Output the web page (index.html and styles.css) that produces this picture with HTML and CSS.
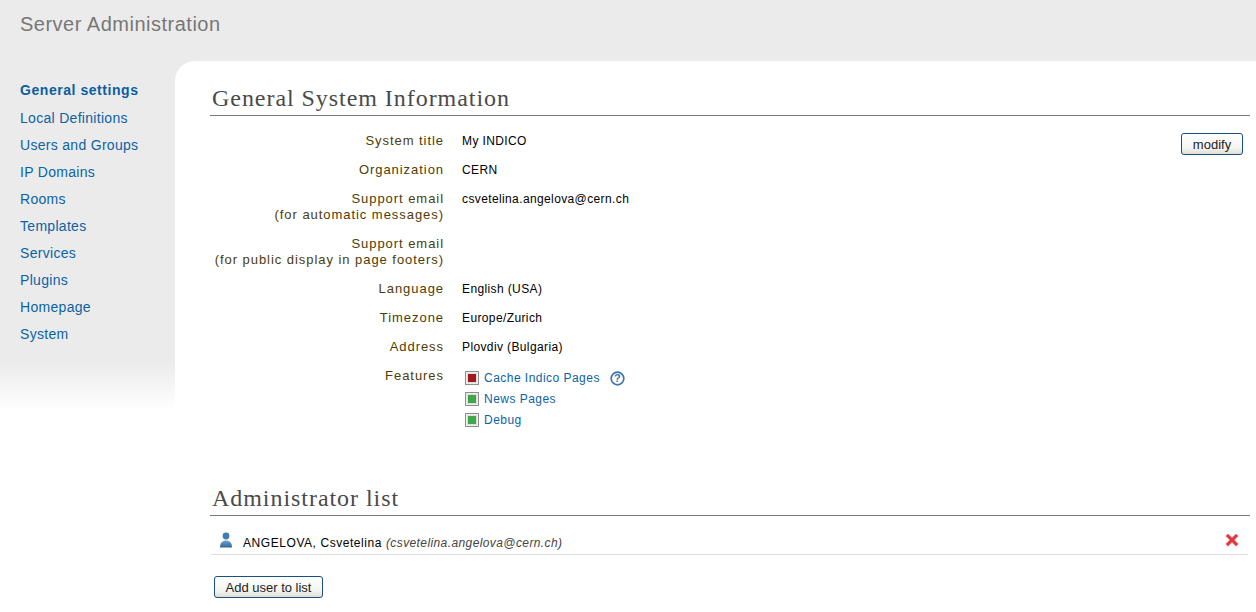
FILE: index.html
```html
<!DOCTYPE html>
<html lang="en">
<head>
<meta charset="utf-8">
<title>Server Administration</title>
<link rel="stylesheet" href="styles.css">
</head>
<body>
<header class="top"><h1>Server Administration</h1></header>
<div class="shell">
  <nav class="side">
    <a class="active" href="#">General settings</a>
    <a href="#">Local Definitions</a>
    <a href="#">Users and Groups</a>
    <a href="#">IP Domains</a>
    <a href="#">Rooms</a>
    <a href="#">Templates</a>
    <a href="#">Services</a>
    <a href="#">Plugins</a>
    <a href="#">Homepage</a>
    <a href="#">System</a>
  </nav>
  <main class="main">
    <h2 class="section">General System Information</h2>
    <div class="info">
      <div class="grid">
        <div class="label">System title</div><div class="value">My INDICO</div>
        <div class="label">Organization</div><div class="value">CERN</div>
        <div class="label">Support email<br>(for automatic messages)</div><div class="value">csvetelina.angelova@cern.ch</div>
        <div class="label">Support email<br>(for public display in page footers)</div><div class="value"></div>
        <div class="label">Language</div><div class="value">English (USA)</div>
        <div class="label">Timezone</div><div class="value">Europe/Zurich</div>
        <div class="label">Address</div><div class="value">Plovdiv (Bulgaria)</div>
        <div class="label">Features</div>
        <div class="features">
          <div class="feature"><span class="box"><i class="off"></i></span><a href="#">Cache Indico Pages</a>
            <svg class="help" width="15" height="15" viewBox="0 0 15 15"><circle cx="7.5" cy="7.5" r="6.3" fill="#fff" stroke="#3f75a8" stroke-width="1.7"/><text x="7.5" y="11.3" text-anchor="middle" class="helpq">?</text></svg>
          </div>
          <div class="feature"><span class="box"><i class="on"></i></span><a href="#">News Pages</a></div>
          <div class="feature"><span class="box"><i class="on"></i></span><a href="#">Debug</a></div>
        </div>
      </div>
      <button class="btn modify" type="button">modify</button>
    </div>
    <h2 class="section second">Administrator list</h2>
    <div class="user">
      <svg class="person" width="14" height="16" viewBox="0 0 14 16"><defs><linearGradient id="pg" x1="0" y1="0" x2="0" y2="1"><stop offset="0" stop-color="#6ea3d0"/><stop offset="1" stop-color="#2f6797"/></linearGradient></defs><circle cx="7" cy="4" r="3.4" fill="#3f7cb0"/><path d="M1 15.500C1 10.500 3.500 8.500 7 8.500S13 10.500 13 15.500Z" fill="url(#pg)"/></svg>
      <span class="name">ANGELOVA, Csvetelina <em>(csvetelina.angelova@cern.ch)</em></span>
      <svg class="remove" width="14" height="14" viewBox="0 0 14 14"><path d="M3 1 7 4.800 11 1 13.200 3 9.300 7 13.200 11 11 13.200 7 9.300 3 13.200 .8 11 4.800 7 .8 3Z" fill="#e8343f" stroke="#d9757a" stroke-width=".7"/></svg>
    </div>
    <button class="btn add" type="button">Add user to list</button>
  </main>
</div>
</body>
</html>
```
FILE: styles.css
```css
* { box-sizing: border-box; }
html, body { margin: 0; height: 100%; }
body {
  width: 1256px;
  height: 612px;
  overflow: hidden;
  background: #fff;
  font-family: "Liberation Sans", Arial, sans-serif;
  font-size: 12px;
  color: #000;
  display: flex;
  flex-direction: column;
}
a { color: #0b63a5; text-decoration: none; }

.top { height: 61px; flex: none; background: #ebebeb; padding: 13px 0 0 20px; }
.top h1 { margin: 0; font-size: 20px; line-height: 23px; font-weight: 400; color: #777; letter-spacing: .5px; }

.shell {
  flex: 1;
  display: flex;
  align-items: flex-start;
  background: linear-gradient(to bottom, #ebebeb 0, #ebebeb 300px, #fff 350px) 0 0 / 200px 350px no-repeat;
}

.side {
  width: 175px;
  flex: none;
  padding: 16px 0 0 20px;
  display: flex;
  flex-direction: column;
}
.side a { height: 27px; line-height: 27px; font-size: 14px; letter-spacing: .3px; }
.side a.active { height: 28px; font-weight: 700; color: #0b5ea0; letter-spacing: .55px; }

.main { flex: 1; height: 551px; padding: 20px 6px 0 35px; background: #fff; border-top-left-radius: 20px; }

.section {
  margin: 0;
  height: 35px;
  padding-left: 2px;
  border-bottom: 1px solid #777;
  font-family: "Liberation Serif", "Times New Roman", serif;
  font-size: 24px;
  line-height: 35px;
  font-weight: 400;
  color: #4a4a4a;
  letter-spacing: .95px;
}
.second { margin-top: 53px; }

.info { position: relative; padding-top: 17px; }
.grid { display: grid; grid-template-columns: 234px 1fr; column-gap: 18px; row-gap: 13px; }
.label { text-align: right; color: #4e3b05; font-size: 13px; line-height: 16px; letter-spacing: .95px; }
.value { font-size: 12px; line-height: 16px; min-height: 16px; letter-spacing: .38px; }
.features { display: flex; flex-direction: column; padding: 2px 0 0 3px; gap: 5px; }
.feature { display: flex; align-items: center; height: 16px; font-size: 12px; letter-spacing: .47px; }
.feature a { margin-left: 5px; }
.box { width: 14px; height: 14px; border: 1px solid #8f8f8f; background: #eee; display: flex; align-items: center; justify-content: center; }
.box i { display: block; width: 10px; height: 10px; border: 1px solid #ddd; }
.box .off { background: #a11a1f; }
.box .on { background: #3fa64a; }
.help { margin-left: 10px; }
.helpq { font-family: "Liberation Sans", Arial, sans-serif; font-size: 11px; font-weight: 700; fill: #3f75a8; }

.btn {
  font-family: "Liberation Sans", Arial, sans-serif;
  font-size: 13px;
  color: #222;
  padding: 0;
  height: 22px;
  border: 1px solid #1b4f80;
  border-radius: 3px;
  background: linear-gradient(to bottom, #fff 0, #f4f4f0 70%, #deddd6 100%);
}
.modify { position: absolute; top: 17px; right: 7px; width: 62px; }
.add { display: block; width: 109px; margin: 21px 0 0 4px; }

.user {
  display: flex;
  align-items: flex-end;
  height: 39px;
  margin: 0 2px 0 1px;
  padding: 0 9px 4px 8px;
  border-bottom: 1px solid #ddd;
}
.person { flex: none; margin-bottom: 2px; }
.name { margin-left: 10px; font-size: 12px; line-height: 14px; letter-spacing: .56px; }
.name em { color: #444; font-size: 12px; letter-spacing: .4px; }
.remove { margin-left: auto; margin-bottom: 3px; }
```
